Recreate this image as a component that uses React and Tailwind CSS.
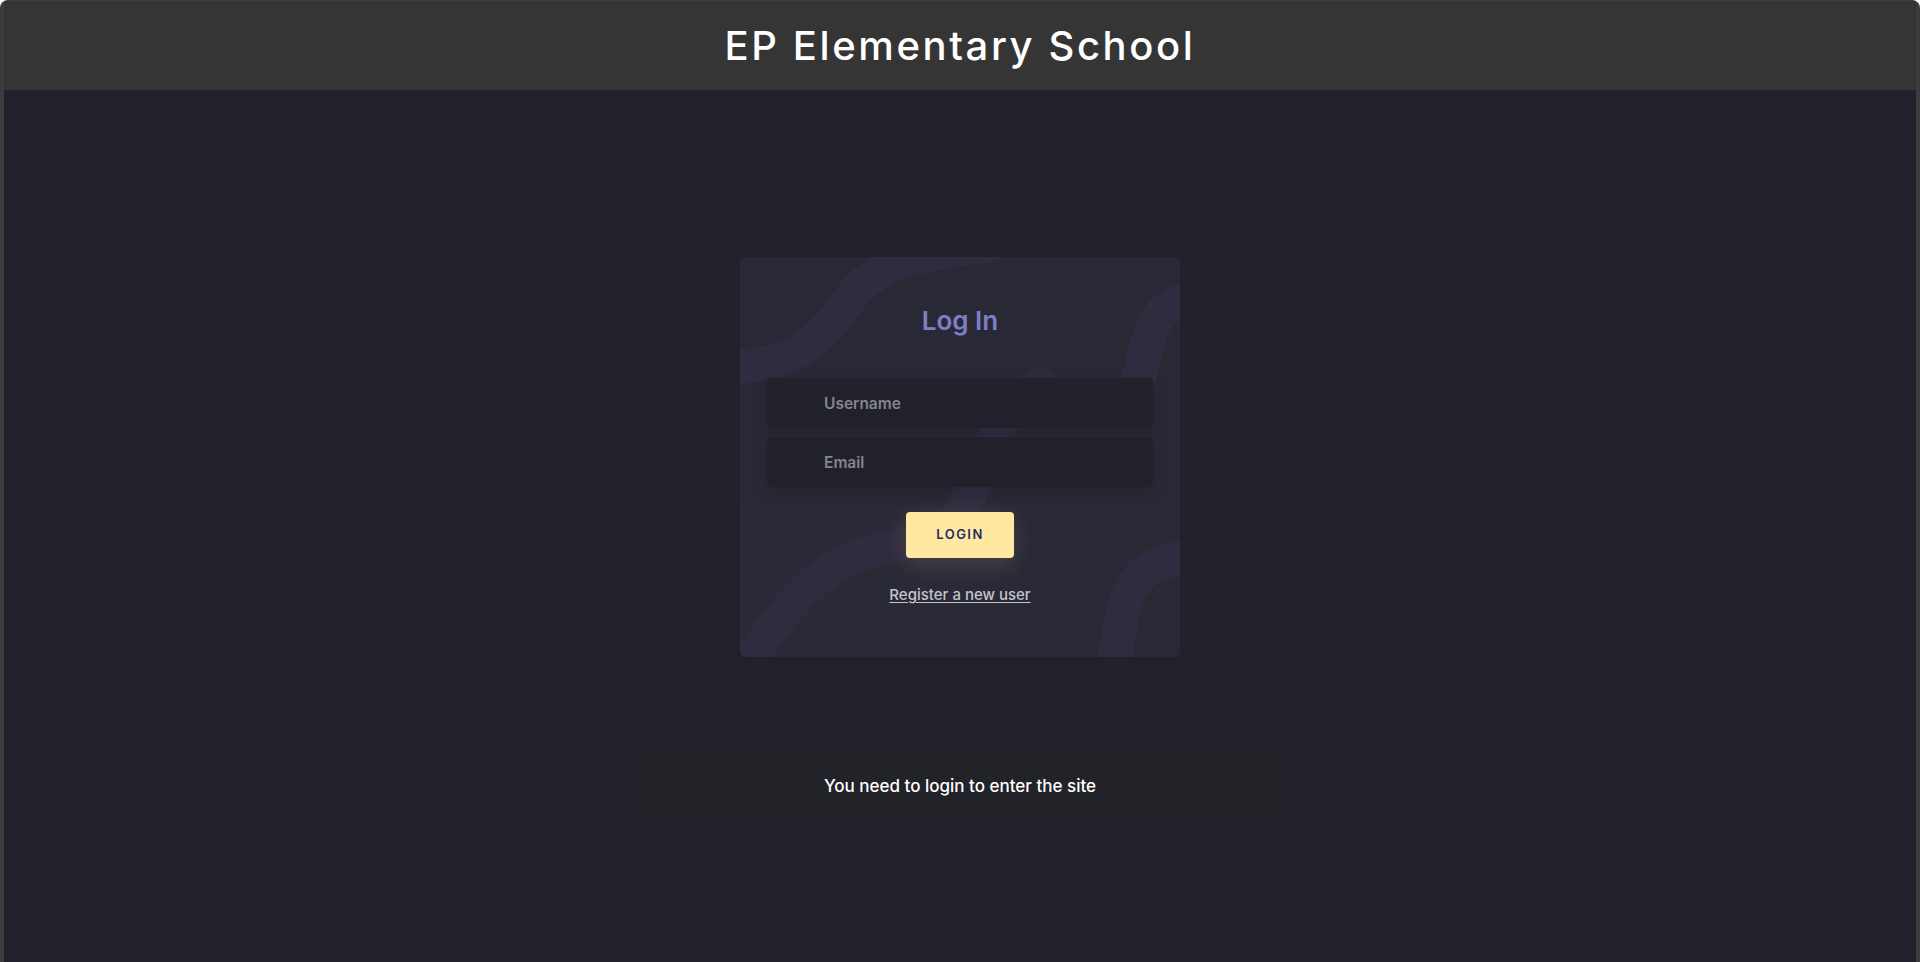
import { useState } from 'react'

const font = { fontFamily: 'Inter, "Noto Sans", sans-serif' }

function Waves() {
  return (
    <svg
      className="absolute inset-0 h-full w-full pointer-events-none"
      viewBox="0 0 440 400"
      preserveAspectRatio="none"
      fill="none"
    >
      <g stroke="#312d41" strokeWidth="34" strokeLinecap="round" opacity="0.85">
        <path d="M -30 112 C 30 110, 70 100, 100 55 S 160 -2, 250 -12" />
        <path d="M 470 40 C 425 38, 412 62, 404 100 S 392 135, 382 150" />
        <path d="M -10 430 C 30 380, 60 310, 140 292 S 215 270, 235 225 S 255 160, 300 128" />
        <path d="M 470 300 C 410 298, 392 318, 384 352 S 376 395, 372 430" />
      </g>
    </svg>
  )
}

export default function App() {
  const [username, setUsername] = useState('')
  const [email, setEmail] = useState('')

  return (
    <div
      className="min-h-screen bg-[#21212b] border-x-4 border-t border-[#3c3c3c] rounded-t-lg overflow-hidden flex flex-col"
      style={font}
    >
      {/* Header */}
      <header className="h-[89px] bg-[#353535] flex items-center justify-center">
        <h1 className="text-[40px] font-medium tracking-[2.6px] text-white">EP Elementary School</h1>
      </header>

      <main className="flex-1 flex flex-col items-center pt-[167px]">
        {/* Login card */}
        <div className="relative w-[440px] h-[400px] rounded-md bg-[#2a2a37] overflow-hidden">
          <Waves />
          <div className="relative flex flex-col items-center px-[27px] pt-[44px]">
            <h2 className="text-[26px] leading-[40px] font-semibold text-[#7e7ec8]">Log In</h2>

            <div className="w-full mt-[37px] flex flex-col gap-[9px]">
              <input
                value={username}
                onChange={(e) => setUsername(e.target.value)}
                placeholder="Username"
                className="h-[50px] w-full rounded bg-[#21212b] pl-[57px] pr-4 text-[15.5px] font-semibold text-gray-200 placeholder:text-[#85858f] outline-none shadow-[0_4px_12px_rgba(0,0,0,0.12)]"
              />
              <input
                value={email}
                onChange={(e) => setEmail(e.target.value)}
                placeholder="Email"
                className="h-[50px] w-full rounded bg-[#21212b] pl-[57px] pr-4 text-[15.5px] font-semibold text-gray-200 placeholder:text-[#85858f] outline-none shadow-[0_4px_12px_rgba(0,0,0,0.12)]"
              />
            </div>

            <button className="mt-[25px] h-[46px] w-[108px] rounded bg-[#ffe9a1] text-[13px] font-semibold tracking-[1.5px] text-[#1d2a6a] shadow-[0_6px_22px_rgba(255,235,170,0.14)]">
              LOGIN
            </button>

            <a href="#" className="mt-[26px] text-[15px] leading-[22px] font-medium text-[#c4c4cc] underline underline-offset-2">
              Register a new user
            </a>
          </div>
        </div>

        {/* Notice */}
        <div className="mt-[96px] w-[646px] h-[75px] rounded-md bg-[#222329] flex items-center justify-center pb-[8px]">
          <p className="text-[17px] font-medium text-white">You need to login to enter the site</p>
        </div>
      </main>
    </div>
  )
}
